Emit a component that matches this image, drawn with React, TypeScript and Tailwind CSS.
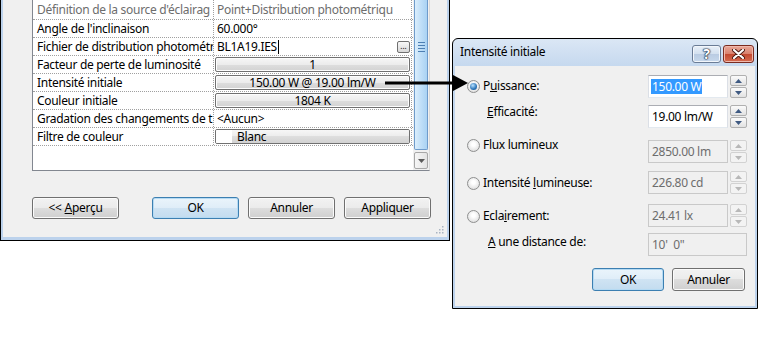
import React from "react";

type BtnProps = { label: React.ReactNode; focused?: boolean; className?: string };

function WinButton({ label, focused, className = "" }: BtnProps) {
  return (
    <div
      className={`flex items-center justify-center rounded-[3px] border text-[12px] leading-none text-black ${
        focused
          ? "border-[#3c7fb1] bg-[linear-gradient(#eaf4fb_0%,#dfedf8_50%,#cfe3f3_50%,#c3dcef_100%)] shadow-[inset_0_0_0_1px_#b5daf3]"
          : "border-[#707070] bg-[linear-gradient(#f2f2f2_0%,#ebebeb_50%,#dddddd_50%,#cfcfcf_100%)] shadow-[inset_0_0_0_1px_#fbfbfb]"
      } ${className}`}
    >
      {label}
    </div>
  );
}

function CellButton({ label }: { label: string }) {
  return (
    <div className="mx-[1px] my-[1px] flex h-[15px] items-center justify-center rounded-[2px] border border-[#707070] bg-[linear-gradient(#f6f6f6_0%,#ececec_50%,#dedede_50%,#d2d2d2_100%)] leading-none shadow-[inset_0_0_0_1px_#fdfdfd]">
      {label}
    </div>
  );
}

function PropRow({
  name,
  muted,
  first,
  children,
}: {
  name: string;
  muted?: boolean;
  first?: boolean;
  children: React.ReactNode;
}) {
  return (
    <div
      className={`flex border-b border-dotted border-[#a0a0a0] ${first ? "h-[20px] leading-[19px]" : "h-[18px] leading-[17px]"}`}
    >
      <div
        className={`w-[181px] shrink-0 overflow-hidden whitespace-nowrap border-r border-dotted border-[#a0a0a0] pl-[4px] ${
          muted ? "text-[#6d6d6d]" : "text-black"
        }`}
      >
        {name}
      </div>
      <div className="w-[198px] shrink-0 overflow-hidden whitespace-nowrap border-r border-dotted border-[#a0a0a0]">
        {children}
      </div>
    </div>
  );
}

function Spinner({ disabled }: { disabled?: boolean }) {
  const arrow = disabled ? "#b8b8b8" : "#3f5a82";
  return (
    <div className="ml-[2px] flex w-[17px] flex-col gap-[1px]">
      {["up", "down"].map((d) => (
        <div
          key={d}
          className={`flex h-[11px] items-center justify-center rounded-[2px] border ${
            disabled
              ? "border-[#d2d2d2] bg-[#f3f3f3]"
              : "border-[#b0b0b0] bg-[linear-gradient(#fbfbfb,#e2e2e2)]"
          }`}
        >
          <svg width="7" height="4" viewBox="0 0 7 4">
            <path d={d === "up" ? "M0 4 L3.5 0 L7 4Z" : "M0 0 L3.5 4 L7 0Z"} fill={arrow} />
          </svg>
        </div>
      ))}
    </div>
  );
}

function Field({
  value,
  selected,
  disabled,
  wide,
}: {
  value: string;
  selected?: boolean;
  disabled?: boolean;
  wide?: boolean;
}) {
  return (
    <div
      className={`flex h-[23px] items-start whitespace-pre border pl-[2px] pt-[3px] leading-[15px] ${wide ? "w-[99px]" : "w-[80px]"} ${
        disabled
          ? "border-[#c9c9c9] bg-[#f0f0f0] text-[#6d6d6d]"
          : "border-[#abadb3] border-b-[#e3e9ef] border-x-[#dbdfe6] bg-white text-black"
      }`}
    >
      {selected ? <span className="bg-[#3399ff] px-[1px] text-white">{value}</span> : <span className="px-[1px]">{value}</span>}
    </div>
  );
}

function Radio({ checked, label }: { checked?: boolean; label: React.ReactNode }) {
  return (
    <div className="flex h-[16px] items-center gap-[3px]">
      <div className="flex h-[13px] w-[13px] items-center justify-center rounded-full border border-[#8e8f8f] bg-[radial-gradient(circle_at_50%_40%,#ffffff_20%,#d4d4d4)]">
        {checked && (
          <div className="h-[7px] w-[7px] rounded-full bg-[radial-gradient(circle_at_40%_35%,#b9e2ff,#2a74b8_60%,#184a80)]" />
        )}
      </div>
      <span className="leading-[16px]">{label}</span>
    </div>
  );
}

function DialogRow({
  gap,
  label,
  children,
}: {
  gap: string;
  label: React.ReactNode;
  children: React.ReactNode;
}) {
  return (
    <div className={`flex h-[23px] items-start ${gap}`}>
      <div className="w-[181px] shrink-0">{label}</div>
      {children}
    </div>
  );
}

export default function App() {
  return (
    <div className="relative h-[339px] w-[776px] overflow-hidden bg-white font-['Noto_Sans',sans-serif] text-[12px] tracking-[-0.3px] text-black">
      {/* background window: properties dialog */}
      <div className="absolute left-0 top-0 flex h-[241px] w-[450px] flex-col border-x border-b border-black bg-[#bcd2ec] px-[2px] pb-[3px]">
        <div className="relative flex flex-1 flex-col bg-[#f0f0f0] pl-[29px]">
          <div className="flex h-[171px] w-[398px] border-b border-l border-r border-[#828790] border-r-[#d9d9d9] bg-white">
            <div className="w-[380px] shrink-0">
              <PropRow name="Définition de la source d'éclairag" muted first>
                <span className="pl-[3px] text-[#6d6d6d]">Point+Distribution photométriqu</span>
              </PropRow>
              <PropRow name="Angle de l'inclinaison">
                <span className="pl-[3px]">60.000°</span>
              </PropRow>
              <PropRow name="Fichier de distribution photométr">
                <div className="flex h-full items-center justify-between pl-[3px] pr-[1px]">
                  <span className="flex items-center">
                    BL1A19.IES
                    <span className="ml-[1px] inline-block h-[14px] w-[1px] bg-black" />
                  </span>
                  <span className="flex h-[12px] w-[13px] items-end justify-center rounded-[2px] border border-[#707070] bg-[linear-gradient(#f8f8f8,#d8d8d8)] pb-[2px] text-[8px] leading-none tracking-normal">
                    ...
                  </span>
                </div>
              </PropRow>
              <PropRow name="Facteur de perte de luminosité">
                <CellButton label="1" />
              </PropRow>
              <PropRow name="Intensité initiale">
                <CellButton label="150.00 W @ 19.00 lm/W" />
              </PropRow>
              <PropRow name="Couleur initiale">
                <CellButton label="1804 K" />
              </PropRow>
              <PropRow name="Gradation des changements de t">
                <span className="pl-[3px]">&lt;Aucun&gt;</span>
              </PropRow>
              <PropRow name="Filtre de couleur">
                <div className="mx-[1px] my-[1px] flex h-[15px] overflow-hidden rounded-[2px] border border-[#707070]">
                  <div className="w-[16px] bg-white" />
                  <div className="flex flex-1 items-center bg-[linear-gradient(#f6f6f6_0%,#ececec_50%,#dedede_50%,#d2d2d2_100%)] pl-[5px] leading-none">
                    Blanc
                  </div>
                </div>
              </PropRow>
            </div>
            {/* scrollbar */}
            <div className="flex w-[16px] flex-col bg-[#f0f0f0] px-[1px]">
              <div className="flex h-[150px] flex-col items-center rounded-b-[2px] border border-t-0 border-[#6e9bcb] bg-[linear-gradient(90deg,#dbeefc,#c2e0f8_45%,#a9d2f3)] pt-[42px]">
                <div className="flex w-[7px] flex-col gap-[2px]">
                  <div className="h-[1px] bg-[#4d7fb3]" />
                  <div className="h-[1px] bg-[#4d7fb3]" />
                  <div className="h-[1px] bg-[#4d7fb3]" />
                  <div className="h-[1px] bg-[#4d7fb3]" />
                </div>
              </div>
              <div className="mt-[2px] flex h-[17px] items-center justify-center rounded-[2px] border border-[#a7a7a7] bg-[linear-gradient(90deg,#f6f6f6,#e3e3e3)]">
                <svg width="7" height="4" viewBox="0 0 7 4">
                  <path d="M0 0 L3.5 4 L7 0Z" fill="#5a5a5a" />
                </svg>
              </div>
            </div>
          </div>

          <div className="mt-[26px] flex">
            <WinButton
              className="h-[22px] w-[87px]"
              label={
                <>
                  &lt;&lt; <u className="ml-[3px]">A</u>perçu
                </>
              }
            />
            <WinButton focused className="ml-[33px] h-[22px] w-[87px]" label="OK" />
            <WinButton className="ml-[9px] h-[22px] w-[87px]" label="Annuler" />
            <WinButton className="ml-[9px] h-[22px] w-[87px]" label="Appliquer" />
          </div>

          <svg className="absolute bottom-[3px] right-[3px]" width="9" height="9" viewBox="0 0 9 9">
            <g fill="#a9b4c2">
              <rect x="7" y="1" width="1.5" height="1.5" />
              <rect x="4" y="4" width="1.5" height="1.5" />
              <rect x="7" y="4" width="1.5" height="1.5" />
              <rect x="1" y="7" width="1.5" height="1.5" />
              <rect x="4" y="7" width="1.5" height="1.5" />
              <rect x="7" y="7" width="1.5" height="1.5" />
            </g>
          </svg>
        </div>
      </div>

      {/* foreground dialog */}
      <div className="absolute left-[452px] top-[38px] flex h-[271px] w-[306px] flex-col rounded-t-[6px] border border-black bg-[linear-gradient(#dbe7f5,#c3d7ee_30px,#bcd2ec)] px-[2px] pb-[2px]">
        <div className="flex h-[27px] items-center">
          <span className="pl-[5px] pb-[1px] text-[12px]">Intensité initiale</span>
          <div className="ml-auto mt-[3px] flex gap-[2px] pr-[1px]">
            <div className="flex h-[18px] w-[29px] items-center justify-center rounded-[3px] border border-[#6a7c96] bg-[linear-gradient(#e8f0f9_0%,#d3e0ef_50%,#b9cbe2_50%,#c7d8ec_100%)] shadow-[inset_0_0_0_1px_#f2f6fb]">
              <span className="text-[14px] font-bold leading-none text-white [text-shadow:0_0_1px_#1f2d44,0_0_1px_#1f2d44,0_0_1px_#1f2d44,0_0_2px_#1f2d44]">
                ?
              </span>
            </div>
            <div className="flex h-[18px] w-[31px] items-center justify-center rounded-[3px] border border-[#7a2b20] bg-[linear-gradient(#e9a99b_0%,#d9806c_50%,#c2472f_50%,#d56b50_100%)] shadow-[inset_0_0_0_1px_#f0b9ad]">
              <svg width="13" height="10" viewBox="0 0 13 10">
                <path d="M2 1 L11 9 M11 1 L2 9" stroke="#4a1810" strokeWidth="4" strokeLinecap="round" />
                <path d="M2 1 L11 9 M11 1 L2 9" stroke="#ffffff" strokeWidth="2.2" strokeLinecap="round" />
              </svg>
            </div>
          </div>
        </div>

        <div className="flex flex-1 flex-col bg-[#f0f0f0] pl-[12px] pt-[9px]">
          <DialogRow
            gap=""
            label={
              <div className="mt-[3px]">
                <Radio
                  checked
                  label={
                    <>
                      P<u>u</u>issance:
                    </>
                  }
                />
              </div>
            }
          >
            <Field value="150.00 W" selected />
            <Spinner />
          </DialogRow>

          <DialogRow
            gap="mt-[7px]"
            label={
              <div className="-mt-[1px] h-[16px] pl-[20px] leading-[16px]">
                <u>E</u>fficacité:
              </div>
            }
          >
            <Field value="19.00 lm/W" />
            <Spinner />
          </DialogRow>

          <DialogRow
            gap="mt-[12px]"
            label={
              <div className="-mt-[3px]">
                <Radio label="Flux lumineux" />
              </div>
            }
          >
            <Field value="2850.00 lm" disabled />
            <Spinner disabled />
          </DialogRow>

          <DialogRow
            gap="mt-[8px]"
            label={
              <div className="mt-[4px]">
                <Radio
                  label={
                    <>
                      Intensité <u>l</u>umineuse:
                    </>
                  }
                />
              </div>
            }
          >
            <Field value="226.80 cd" disabled />
            <Spinner disabled />
          </DialogRow>

          <DialogRow
            gap="mt-[10px]"
            label={
              <div className="mt-[4px]">
                <Radio
                  label={
                    <>
                      Ecla<u>i</u>rement:
                    </>
                  }
                />
              </div>
            }
          >
            <Field value="24.41 lx" disabled />
            <Spinner disabled />
          </DialogRow>

          <DialogRow
            gap="mt-[6px]"
            label={
              <div className="mt-[1px] h-[16px] pl-[21px] leading-[16px]">
                <u>A</u> une distance de:
              </div>
            }
          >
            <Field value={'10\'  0"'} disabled wide />
          </DialogRow>

          <div className="mt-[12px] flex justify-end gap-[8px] pr-[10px]">
            <WinButton focused className="h-[23px] w-[72px]" label="OK" />
            <WinButton className="h-[23px] w-[73px]" label="Annuler" />
          </div>
        </div>
      </div>

      {/* pointer arrow */}
      <svg className="absolute left-[380px] top-[70px]" width="95" height="30" viewBox="380 70 95 30">
        <line x1="385" y1="83" x2="456" y2="83" stroke="#000" strokeWidth="3" />
        <polygon points="453,75 468,83 453,91" fill="#000" />
      </svg>
    </div>
  );
}
